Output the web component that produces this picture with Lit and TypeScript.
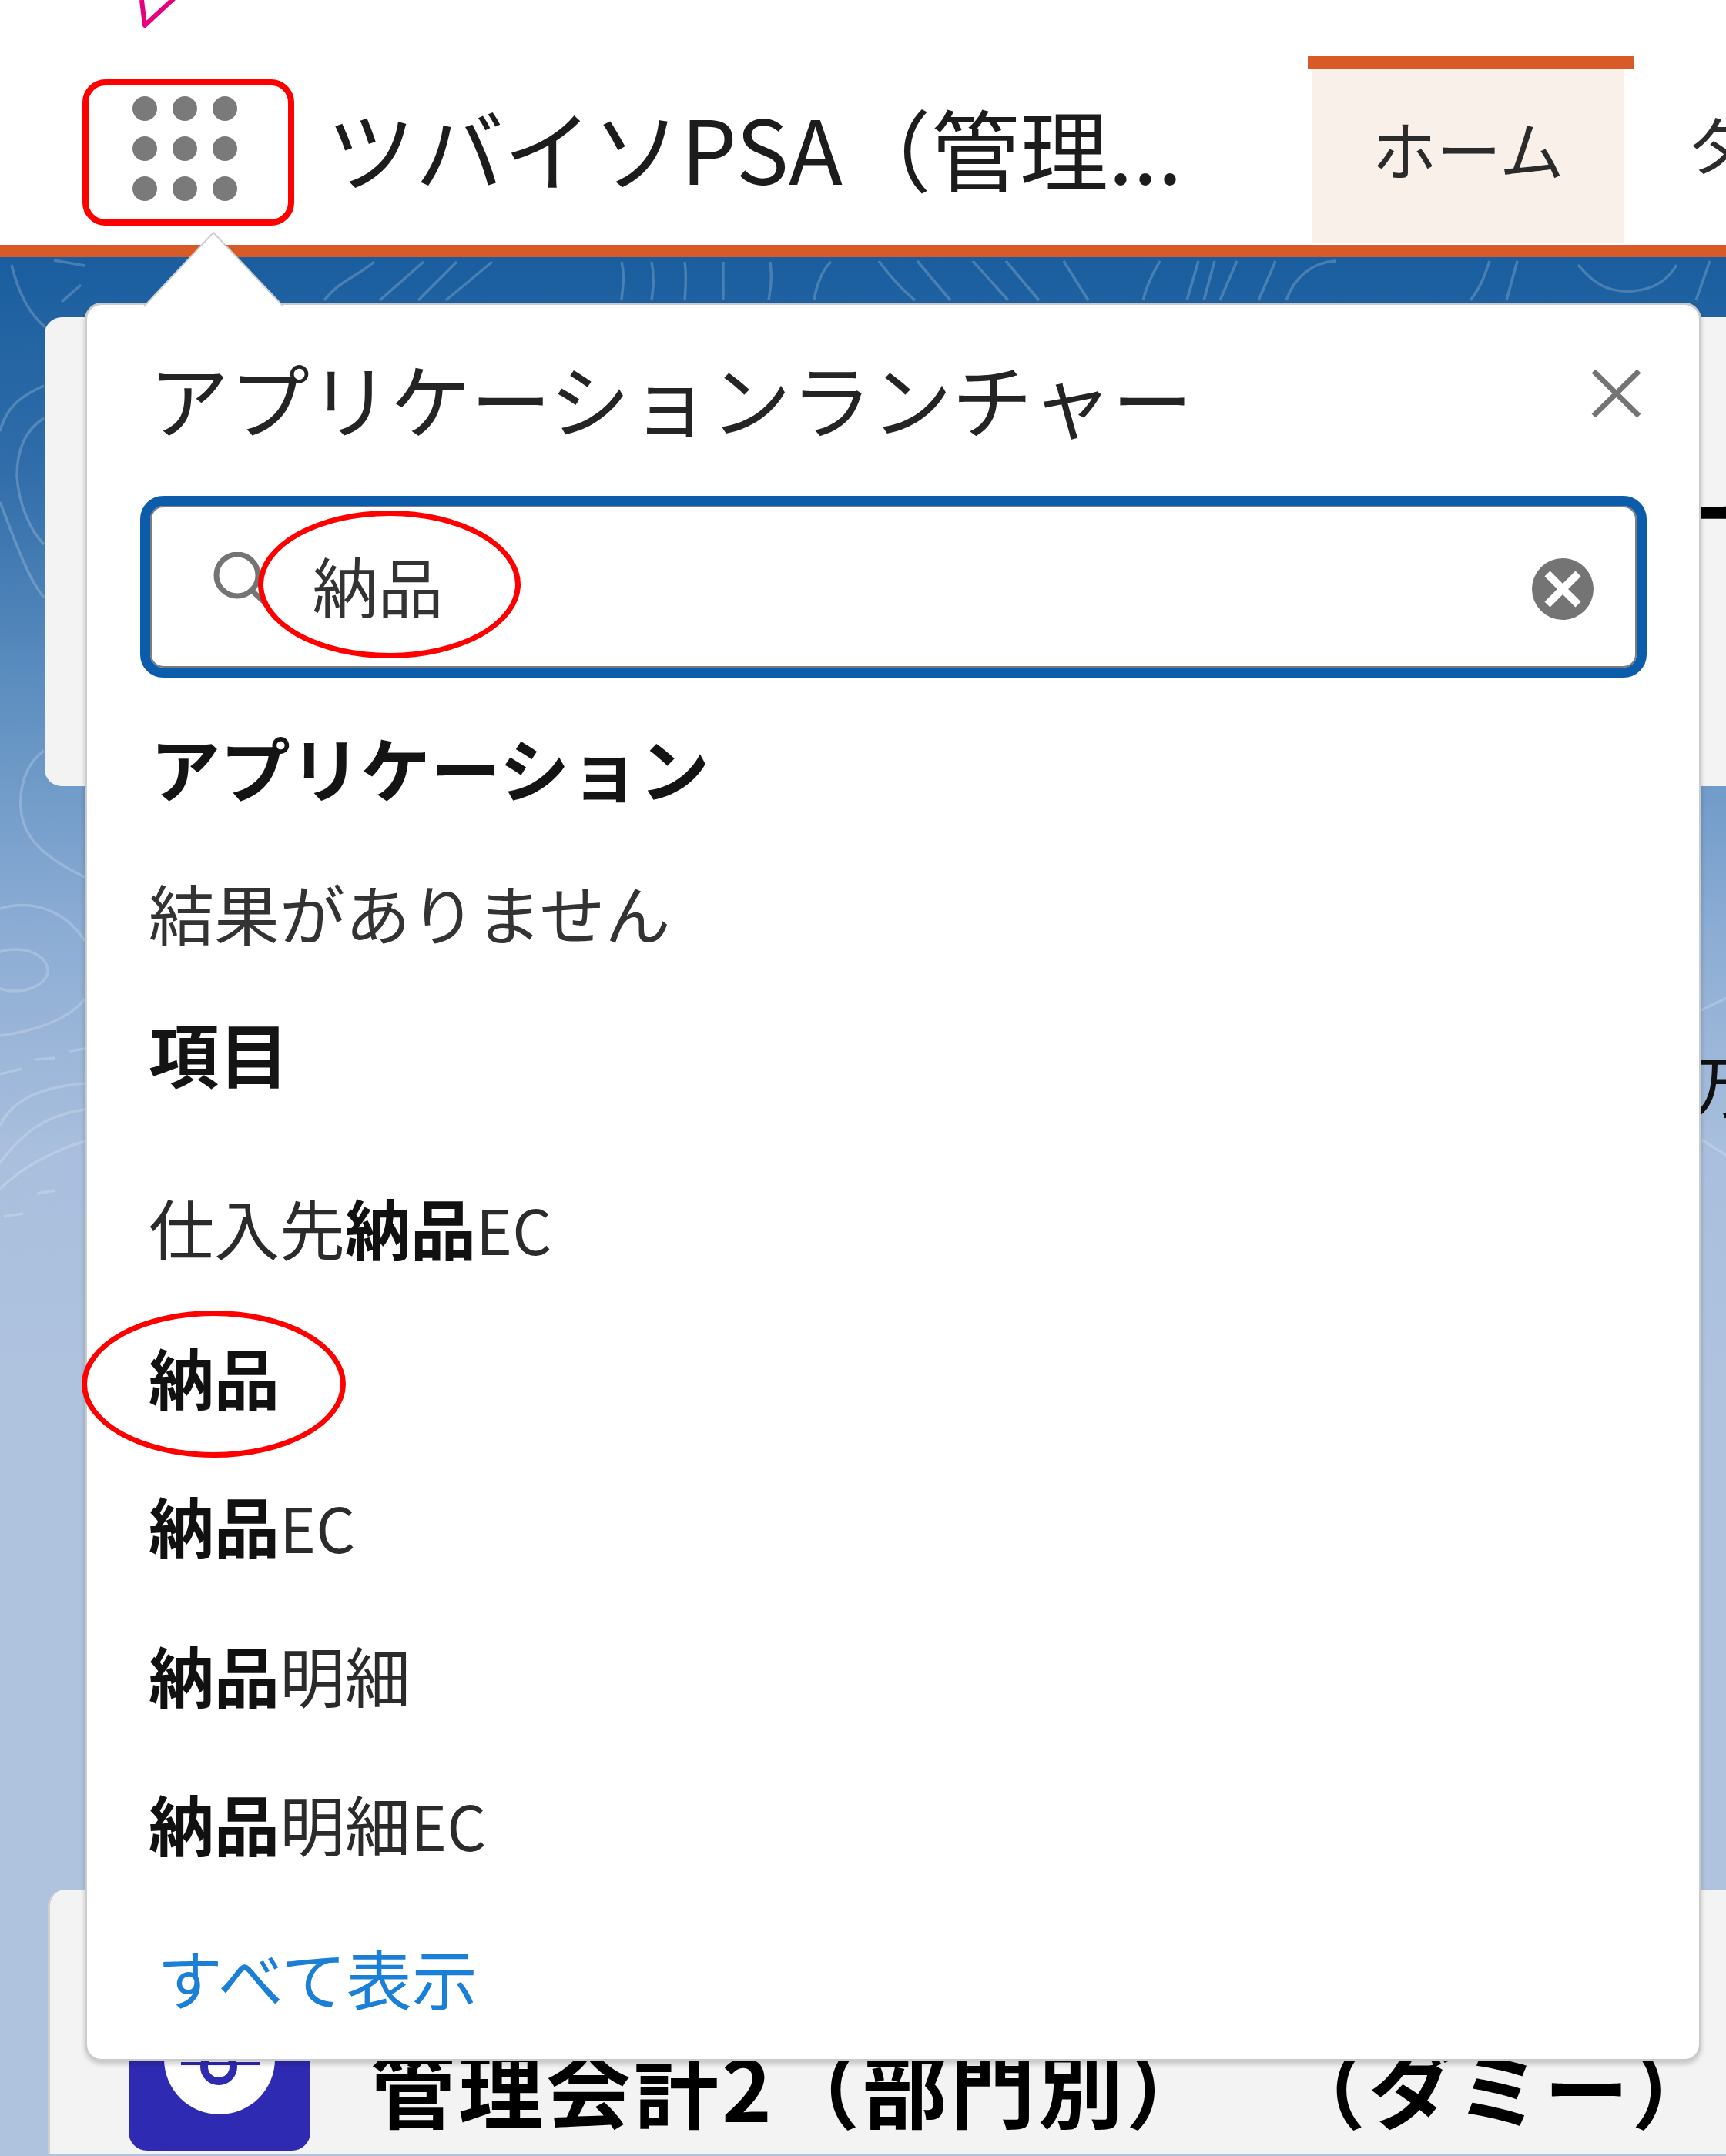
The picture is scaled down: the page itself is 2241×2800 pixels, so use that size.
import { LitElement, html, css, svg } from "lit";
import { customElement } from "lit/decorators.js";

const CONTOURS = [
  "M15 344C25 385 40 410 60 426",
  "M57 501C25 515 8 530 0 560",
  "M0 652C15 690 35 750 57 776",
  "M57 543C30 560 22 590 22 618C24 655 40 690 57 707",
  "M57 975C35 990 25 1020 27 1050C30 1090 60 1115 110 1139",
  "M0 1180C50 1165 90 1190 110 1222",
  "M110 1297C90 1325 40 1340 0 1345",
  "M0 1462C15 1430 50 1412 110 1407",
  "M0 1510C30 1470 60 1448 110 1441",
  "M0 1544C30 1515 65 1496 110 1482",
  "M0 1395L28 1388M45 1376L72 1374M90 1365L110 1362",
  "M5 1580L30 1576M48 1550L72 1546",
  "M421 390C440 365 462 360 486 340",
  "M493 390L550 340M543 390L593 340M579 390L639 340",
  "M807 340C812 360 808 375 807 390M846 340C850 360 848 375 846 390",
  "M889 340C892 360 890 375 889 390M939 340L939 390M1000 340C1003 365 1000 375 998 390",
  "M1057 390C1060 370 1068 350 1079 340",
  "M1141 339C1155 358 1170 375 1188 390M1191 339L1234 390M1263 339L1309 390M1306 339L1349 390M1381 339L1413 390",
  "M1484 390C1490 365 1500 350 1506 339M1541 390L1556 339M1563 390L1577 339M1584 390L1606 339M1634 390L1656 339",
  "M1670 390C1680 360 1705 340 1734 339",
  "M1909 390C1925 370 1930 350 1934 339M1956 390L1970 339",
  "M2049 344C2070 370 2090 380 2120 378C2145 376 2165 365 2177 344",
  "M2202 390L2220 339",
  "M2209 1312L2241 1296M2209 1480L2241 1500",
  "M110 345L70 338M80 392L105 370",
];

@customElement("app-root")
export class AppRoot extends LitElement {
  static styles = css`
    :host {
      display: block;
      position: relative;
      width: 2241px;
      height: 2800px;
      overflow: hidden;
      background: #fff;
      color: #181818;
      font-family: "Noto Sans CJK JP", "Noto Sans", sans-serif;
    }
    .mark { position: absolute; left: 175px; top: 0; }

    .header {
      display: flex;
      align-items: flex-start;
      height: 318px;
      border-bottom: 16px solid #d85a26;
      overflow: hidden;
      white-space: nowrap;
    }
    .launcher {
      flex: none;
      box-sizing: border-box;
      width: 275px;
      height: 190px;
      margin: 103px 0 0 107px;
      padding: 0 9px 10px 0;
      border: 8px solid #ff0000;
      border-radius: 30px;
      display: grid;
      grid-template-columns: repeat(3, 32px);
      grid-auto-rows: 32px;
      gap: 20px;
      justify-content: center;
      align-content: center;
    }
    .dot { border-radius: 50%; background: #7a7a7a; }
    .app-title {
      flex: none;
      width: 1274px;
      margin: 110px 0 0 42px;
      font-size: 115px;
      line-height: 160px;
      color: #1c1c1c;
    }
    .tab {
      flex: none;
      width: 423px;
      height: 245px;
      margin-top: 73px;
      border-top: 16px solid #d85a26;
      box-sizing: border-box;
      padding: 0 12px 3px 5px;
      display: flex;
    }
    .tab-body {
      flex: 1;
      display: flex;
      align-items: center;
      justify-content: center;
      padding-bottom: 20px;
      background: #faf0ea;
      font-size: 84px;
      line-height: 100px;
      color: #2b2b2b;
    }
    .tab-next {
      flex: none;
      margin: 136px 0 0 69px;
      font-size: 84px;
      line-height: 100px;
      color: #2b2b2b;
    }

    .main {
      position: relative;
      height: 2466px;
      background: linear-gradient(
        180deg,
        #1a5e9f 0,
        #2f6ca9 266px,
        #5e8fc0 566px,
        #8bacd4 866px,
        #a9bfdd 1166px,
        #afc3df 1466px
      );
      overflow: hidden;
    }
    .contours { position: absolute; inset: 0; }
    .cards {
      position: relative;
      display: flex;
      flex-direction: column;
      padding-top: 78px;
    }
    .card {
      box-sizing: border-box;
      background: #f3f3f3;
      border-radius: 22px 0 0 22px;
    }
    .card-top {
      margin-left: 58px;
      height: 609px;
      display: flex;
      justify-content: flex-end;
      overflow: hidden;
    }
    .dash {
      margin: 173px -18px 0 0;
      font-size: 108px;
      line-height: 150px;
      font-weight: 700;
      color: #000;
    }
    .note {
      height: 1433px;
      display: flex;
      justify-content: flex-end;
      overflow: hidden;
    }
    .note-glyph {
      margin: 330px -42px 0 0;
      font-size: 90px;
      line-height: 110px;
      color: #111;
    }
    .card-bottom {
      margin-left: 62px;
      height: 344px;
      border-left: 3px solid #d0d0d0;
      border-radius: 22px 0 0 0;
      display: flex;
      align-items: flex-end;
      padding: 0 0 5px 102px;
    }
    .app-icon { flex: none; display: block; }
    .card-name {
      flex: none;
      margin: 0 0 20px 78px;
      font-size: 110px;
      line-height: 130px;
      font-weight: 700;
      letter-spacing: 4px;
      color: #000;
      white-space: pre;
    }

    .pointer { position: absolute; left: 180px; top: 298px; z-index: 2; }
    .panel {
      position: absolute;
      left: 110px;
      top: 393px;
      box-sizing: border-box;
      width: 2099px;
      height: 2284px;
      background: #fff;
      border: 3px solid #cbcbcb;
      border-radius: 22px;
      box-shadow: 0 4px 6px rgba(0, 0, 0, 0.18);
      display: flex;
      flex-direction: column;
    }
    .panel-head {
      height: 248px;
      display: flex;
      justify-content: space-between;
      align-items: flex-start;
      padding: 45px 75px 0 80px;
      box-sizing: border-box;
    }
    .panel-title { font-size: 104.5px; line-height: 150px; color: #242424; white-space: nowrap; }
    .close { display: block; margin-top: 39px; }
    .search {
      box-sizing: border-box;
      height: 236px;
      margin: 0 68px 0 69px;
      border: 13px solid #0b5cab;
      border-radius: 30px;
      box-shadow: inset 0 0 0 2px #7c7c7c;
      display: flex;
      align-items: center;
      padding-left: 82px;
      padding-right: 56px;
    }
    .search-icon { flex: none; display: block; margin-top: -12px; }
    .value {
      flex: none;
      box-sizing: border-box;
      width: 341px;
      height: 192px;
      margin: -6px 0 0 -23px;
      padding-right: 30px;
      border: 7px solid #ff0000;
      border-radius: 50%;
      background: #fff;
      display: flex;
      align-items: center;
      justify-content: center;
      font-size: 85px;
      line-height: 100px;
      color: #333;
      position: relative;
    }
    .clear { display: block; margin: 5px 0 0 auto; }
    .row { height: 100px; line-height: 100px; padding-left: 80px; white-space: nowrap; }
    .heading { font-size: 91px; font-weight: 700; color: #141414; }
    .h-apps { margin-top: 65px; padding-left: 82px; }
    .empty { margin-top: 89px; font-size: 85px; color: #333; }
    .h-items { margin-top: 82px; }
    .list { margin-top: 127px; display: flex; flex-direction: column; gap: 93.6px; }
    .item { font-size: 85px; color: #2b2b2b; }
    .item b { font-weight: 700; color: #111; }
    .ec { font-size: 80px; }
    .picked { position: relative; }
    .picked::before {
      content: "";
      position: absolute;
      left: -7px;
      top: -35px;
      box-sizing: border-box;
      width: 343px;
      height: 191px;
      border: 7px solid #ff0000;
      border-radius: 50%;
    }
    .all {
      margin-top: 100px;
      padding-left: 91px;
      font-size: 85px;
      color: #1b7fd6;
    }
  `;

  private items() {
    const ec = html`<span class="ec">EC</span>`;
    return html`
      <div class="list">
        <div class="row item">仕入先<b>納品</b>${ec}</div>
        <div class="row item picked"><b>納品</b></div>
        <div class="row item"><b>納品</b>${ec}</div>
        <div class="row item"><b>納品</b>明細</div>
        <div class="row item"><b>納品</b>明細${ec}</div>
      </div>
    `;
  }

  render() {
    return html`
      <header class="header">
        <div class="launcher">
          ${Array.from({ length: 9 }, () => html`<span class="dot"></span>`)}
        </div>
        <div class="app-title">ツバイソPSA（管理...</div>
        <div class="tab"><div class="tab-body">ホーム</div></div>
        <div class="tab-next">タ</div>
      </header>

      <svg class="mark" width="70" height="40" viewBox="0 0 70 40" fill="none">
        <path d="M9 0L13 33L55 -6" stroke="#e6007e" stroke-width="6" stroke-linejoin="round" />
      </svg>

      <main class="main">
        <svg class="contours" width="2241" height="2466" viewBox="0 334 2241 2466" fill="none">
          ${CONTOURS.map(
            (d) => svg`<path d=${d} stroke="#fff" stroke-opacity=".2" stroke-width="3.5" />`
          )}
          <ellipse cx="20" cy="1260" rx="42" ry="27" stroke="#fff" stroke-opacity=".2" stroke-width="3.5" />
        </svg>
        <div class="cards">
          <div class="card card-top"><span class="dash">ー</span></div>
          <div class="note"><span class="note-glyph">万</span></div>
          <div class="card card-bottom">
            <svg class="app-icon" width="236" height="236" viewBox="0 0 236 236">
              <rect width="236" height="236" rx="24" fill="#2f2ab2" />
              <circle cx="118" cy="117" r="72" fill="#fff" />
              <path d="M68 123H170" stroke="#2f2ab2" stroke-width="4" />
              <circle cx="117" cy="127" r="19" fill="none" stroke="#2f2ab2" stroke-width="10" />
            </svg>
            <span class="card-name">管理会計2（部門別）   （ダミー）</span>
          </div>
        </div>
      </main>

      <svg class="pointer" width="196" height="104" viewBox="0 0 196 104">
        <path d="M7 100L97 4L188 100Z" fill="#fff" />
        <path d="M7 100L97 4L188 100" fill="none" stroke="#cfcfcf" stroke-width="2" />
      </svg>

      <section class="panel">
        <div class="panel-head">
          <div class="panel-title">アプリケーションランチャー</div>
          <svg class="close" width="65" height="62" viewBox="0 0 65 62">
            <path d="M3 2L62 60M62 2L3 60" stroke="#747474" stroke-width="7" fill="none" />
          </svg>
        </div>
        <div class="search">
          <svg class="search-icon" width="81" height="78" viewBox="0 0 81 78" fill="none">
            <circle cx="31" cy="30" r="27" stroke="#747474" stroke-width="7" />
            <path d="M50 50L78 76" stroke="#747474" stroke-width="7" />
          </svg>
          <div class="value">納品</div>
          <svg class="clear" width="80" height="80" viewBox="0 0 80 80">
            <circle cx="40" cy="40" r="40" fill="#747474" />
            <path d="M20 20L60 60M60 20L20 60" stroke="#fff" stroke-width="10" />
          </svg>
        </div>
        <div class="row heading h-apps">アプリケーション</div>
        <div class="row empty">結果がありません</div>
        <div class="row heading h-items">項目</div>
        ${this.items()}
        <div class="row all">すべて表示</div>
      </section>
    `;
  }
}
